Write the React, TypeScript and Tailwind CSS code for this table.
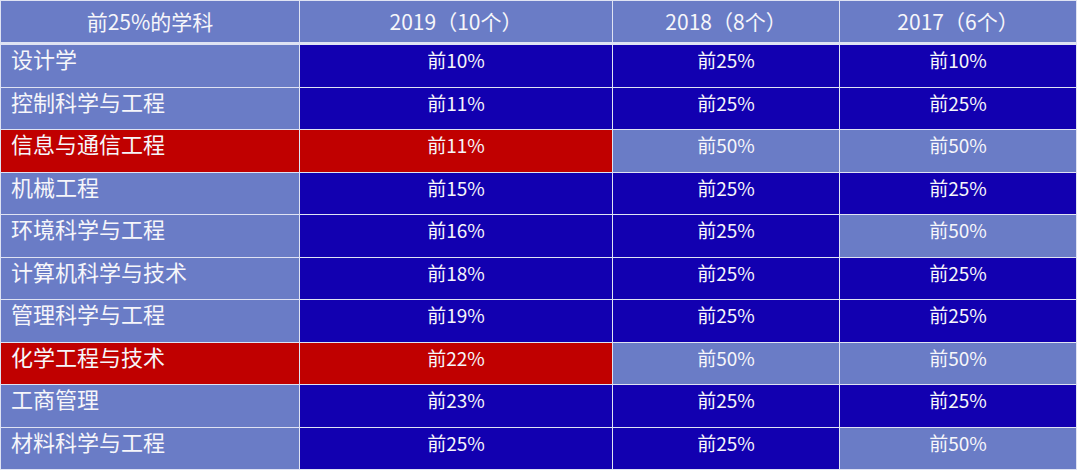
import React from "react";

type C = "L" | "D" | "R";
const rows: { name: string; red?: boolean; cells: [string, C][] }[] = [
  { name: "设计学", cells: [["前10%", "D"], ["前25%", "D"], ["前10%", "D"]] },
  { name: "控制科学与工程", cells: [["前11%", "D"], ["前25%", "D"], ["前25%", "D"]] },
  { name: "信息与通信工程", red: true, cells: [["前11%", "R"], ["前50%", "L"], ["前50%", "L"]] },
  { name: "机械工程", cells: [["前15%", "D"], ["前25%", "D"], ["前25%", "D"]] },
  { name: "环境科学与工程", cells: [["前16%", "D"], ["前25%", "D"], ["前50%", "L"]] },
  { name: "计算机科学与技术", cells: [["前18%", "D"], ["前25%", "D"], ["前25%", "D"]] },
  { name: "管理科学与工程", cells: [["前19%", "D"], ["前25%", "D"], ["前25%", "D"]] },
  { name: "化学工程与技术", red: true, cells: [["前22%", "R"], ["前50%", "L"], ["前50%", "L"]] },
  { name: "工商管理", cells: [["前23%", "D"], ["前25%", "D"], ["前25%", "D"]] },
  { name: "材料科学与工程", cells: [["前25%", "D"], ["前25%", "D"], ["前50%", "L"]] },
];

const bg = (c: C) =>
  c === "D" ? "bg-[#1200b0]" : c === "R" ? "bg-[#c00000]" : "bg-[#6a7cc6]";

const cols = "grid grid-cols-[298px_312px_226px_236px] gap-x-px";

export default function App() {
  return (
    <div
      className="w-[1080px] h-[471px] bg-white"
      style={{ fontFamily: '"Noto Sans CJK SC", "Noto Sans", sans-serif' }}
    >
      <div className="w-[1077px] h-[470px] bg-[#dfe3f3] p-px flex flex-col gap-[3px] text-[#f6f6fa]">
        <div className={`${cols} h-[41px] text-[21px] leading-[24px]`}>
          {["前25%的学科", "2019（10个）", "2018（8个）", "2017（6个）"].map((t) => (
            <div key={t} className="bg-[#6a7cc6] flex items-center justify-center pb-[1px]">
              {t}
            </div>
          ))}
        </div>
        <div className="flex-1 grid grid-rows-10 gap-y-px leading-[26px]">
          {rows.map((r) => (
            <div key={r.name} className={cols}>
              <div className={`${r.red ? "bg-[#c00000]" : "bg-[#6a7cc6]"} pl-[10px] text-[22px]`}>
                {r.name}
              </div>
              {r.cells.map(([t, c], i) => (
                <div key={i} className={`${bg(c)} text-center pt-[2px] text-[19px]`}>
                  {t}
                </div>
              ))}
            </div>
          ))}
        </div>
      </div>
    </div>
  );
}
